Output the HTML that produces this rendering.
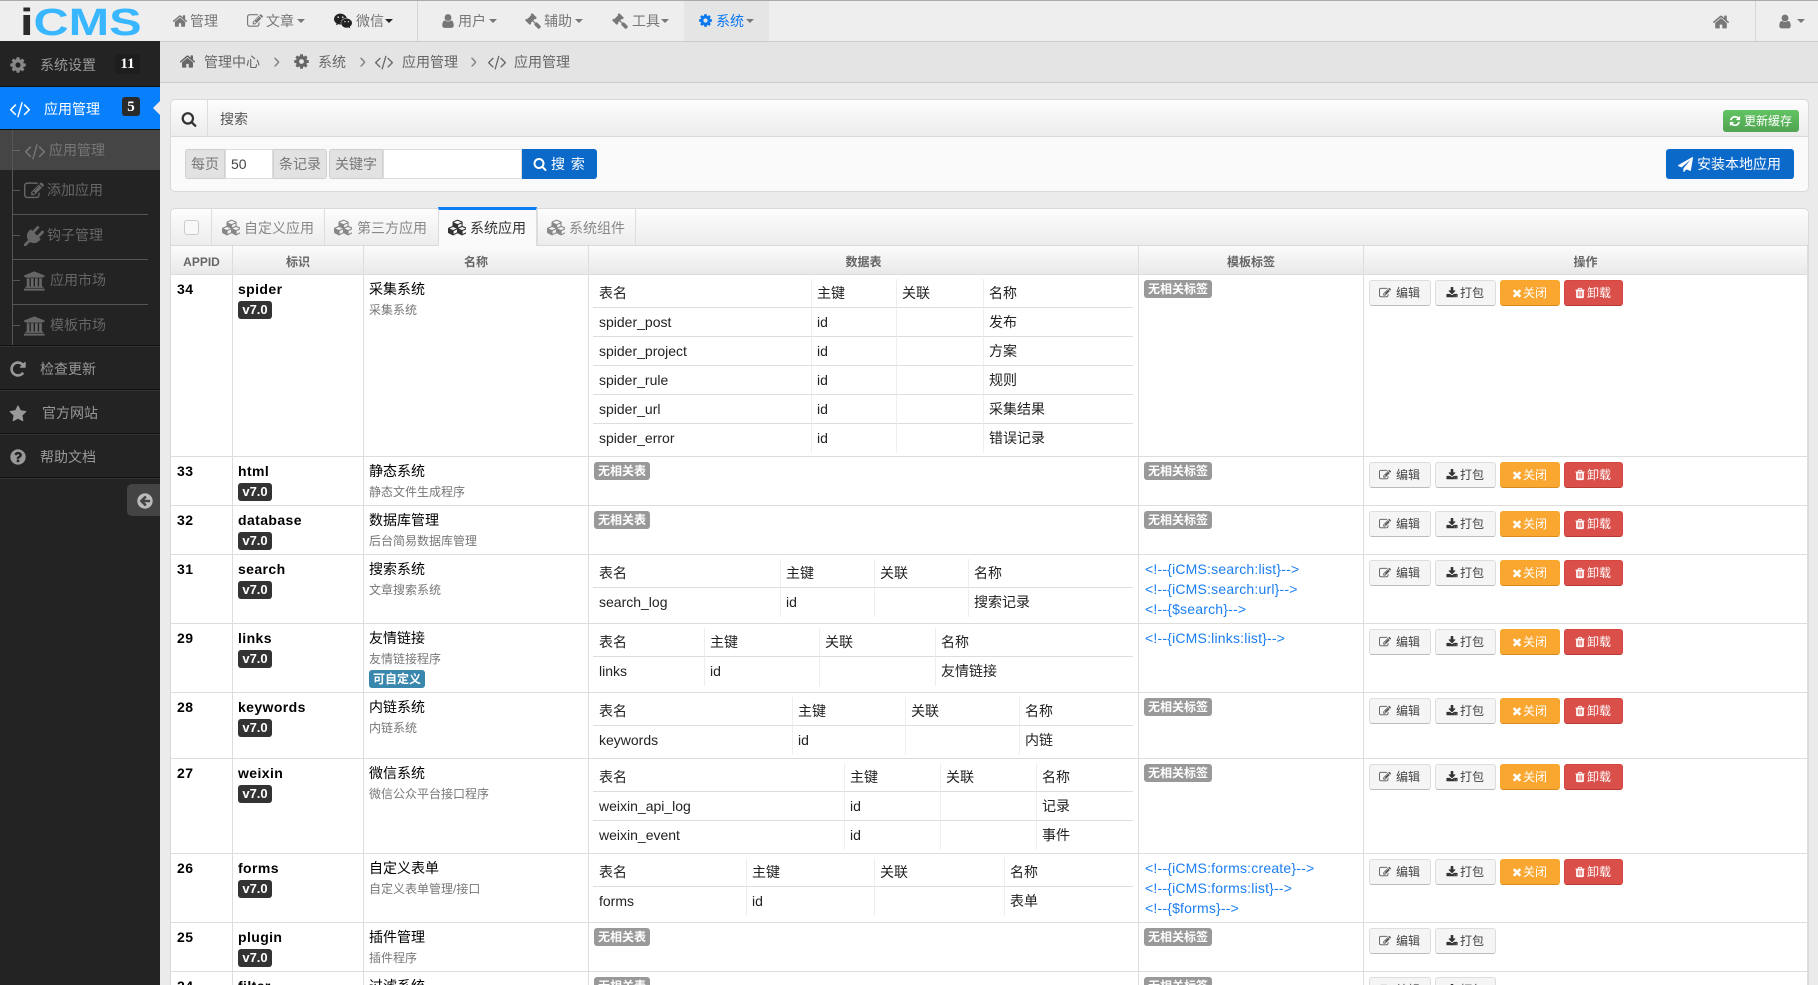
<!DOCTYPE html>
<html lang="zh"><head><meta charset="utf-8"><title>应用管理</title>
<style>
*{box-sizing:border-box}
html,body{margin:0;padding:0;width:1818px;height:985px;overflow:hidden;background:#ebebeb}
body{position:relative;font:14px/20px "Liberation Sans","Noto Sans CJK SC",sans-serif;color:#000}
.a{position:absolute;white-space:nowrap}
svg.i{position:absolute;display:block}
.t{position:absolute;white-space:nowrap;line-height:20px}
.c{position:absolute;width:0;height:0;border-left:4px solid transparent;border-right:4px solid transparent;border-top:4px solid #777}
#nav{position:absolute;left:0;top:0;width:1818px;height:42px;background:#eee;border-top:1px solid #aaa;border-bottom:1px solid #ccc}
#nav .t{color:#777;top:10px}
#side{position:absolute;left:0;top:41px;width:160px;height:944px;background:#232323}
#side .t{color:#999}
#side .s{color:#666}
.sep{position:absolute;left:0;width:160px;height:1px;background:#111}
#bc{position:absolute;left:160px;top:42px;width:1658px;height:41px;background:#e4e4e4;border-bottom:1px solid #ccc}
#bc .t{color:#666;top:10px}
#bc .ch{font-size:22px;color:#888;font-family:"Liberation Sans",sans-serif;top:9px}
.box{position:absolute;left:170px;width:1639px;background:#fafafa;border:1px solid #d9d9d9;border-radius:5px}
.grad{background:linear-gradient(#fdfdfd,#ececec)}
.addon{position:absolute;top:149px;height:30px;background:#e2e2e2;border:1px solid #d0d0d0;color:#777;text-align:center;line-height:28px;font-size:14px}
.inp{position:absolute;top:149px;height:30px;background:#fff;border:1px solid #ddd;line-height:28px;color:#444;padding-left:5px}
#tb{position:absolute;left:171px;top:246px;border-collapse:separate;border-spacing:0;table-layout:fixed;width:1637px;background:#fff}
#tb>thead th{height:29px;padding:4px 0 0;font-size:12px;line-height:24px;color:#666;font-weight:bold;background:linear-gradient(#fbfbfb,#e9e9e9);border-right:1px solid #ddd;border-bottom:1px solid #ddd}
#tb>tbody>tr>td{padding:0;vertical-align:top;border-right:1px solid #ddd;border-bottom:1px solid #ddd}
.id{padding:4px 0 0 6px!important;font-weight:bold;letter-spacing:.5px}
.nm{padding:4px 0 0 5px!important}
.nm b{display:block;letter-spacing:.4px}
.v{display:block;width:34px;height:18px;margin-top:2px;background:#333;color:#fff;border-radius:3px;font:bold 13px/18px "Liberation Sans",sans-serif;text-align:center}
.ti{padding:4px 0 0 5px!important}
.ti small{display:block;font-size:12px;color:#777;line-height:21px;margin-top:1px}
.cu{display:block;width:56px;height:18px;margin-top:0;background:#3a87ad;color:#fff;border-radius:3px;font-size:12px;line-height:18px;font-weight:bold;text-align:center}
.dt{padding:4px 0 0 4px!important}
.dt table{border-collapse:separate;border-spacing:0;table-layout:fixed;width:540px}
.dt td{height:29px;padding:0 0 0 5px;border-right:1px solid #eee;border-bottom:1px solid #ddd;line-height:28px;white-space:nowrap;color:#222;vertical-align:top}
.dt td:first-child{padding-left:6px}
.dt td:last-child{border-right:0}
.dt tr:last-child td{border-bottom:0}
.no{display:inline-block;height:18px;margin:5px 0 0 5px;background:#999;color:#fff;border-radius:3px;font-size:12px;font-weight:bold;line-height:18px;padding:0 4px;vertical-align:top}
.dt .no{margin-left:1px}
.lk{padding:4px 0 0 6px!important;color:#1a7df0;line-height:20px;letter-spacing:.2px}
.op{padding:4px 0 0 0!important;position:relative}
.op .b{position:absolute;top:5px;height:26px;border-radius:3px;font-size:12px;line-height:25px;white-space:nowrap}
.b1{left:5px;width:62px}.b2{left:71px;width:61px}.b3{left:136px;width:60px}.b4{left:200px;width:59px}
.bd{background:#f5f5f5;border:1px solid #ddd;border-bottom:1px solid #bbb;color:#444}
.b3{background:#faa732;border:1px solid #f8a52c;border-bottom:1px solid #d98c1e;color:#fff}
.b4{background:#da4f49;border:1px solid #d6453f;border-bottom:1px solid #b93a35;color:#fff}
.b svg{position:absolute;top:6px;width:12px;height:12px}
.b span{position:absolute;top:0}
.b1 svg{left:9px;fill:#555}.b1 span{left:26px}
.b2 svg{left:10px;fill:#333}.b2 span{left:24px}
.b3 svg{left:10px;fill:#fff}.b3 span{left:22px}
.b4 svg{left:9px;fill:#fff}.b4 span{left:22px}
</style></head><body>
<svg width="0" height="0" style="position:absolute"><defs>
<symbol id="home" viewBox="0 0 1792 1792"><path d="M1472 992v480q0 26-19 45t-45 19h-384v-384h-256v384h-384q-26 0-45-19t-19-45v-480q0-1 .5-3t.5-3l575-474 575 474q1 2 1 6zm223-69l-62 74q-8 9-21 11h-3q-13 0-21-7l-692-577-692 577q-12 8-24 7-13-2-21-11l-62-74q-8-10-7-23.5t11-21.5l719-599q32-26 76-26t76 26l244 204v-195q0-14 9-23t23-9h192q14 0 23 9t9 23v408l219 182q10 8 11 21.5t-7 23.5z"/></symbol>
<symbol id="user" viewBox="0 0 1792 1792"><path d="M1536 1399q0 109-62.5 187t-150.5 78h-854q-88 0-150.5-78t-62.5-187q0-85 8.5-160.5t31.5-152 58.5-131 94-89 134.5-34.5q131 128 313 128t313-128q76 0 134.5 34.5t94 89 58.5 131 31.5 152 8.5 160.5zm-256-887q0 159-112.5 271.5t-271.5 112.5-271.5-112.5-112.5-271.5 112.5-271.5 271.5-112.5 271.5 112.5 112.5 271.5z"/></symbol>
<symbol id="cog" viewBox="0 0 1792 1792"><path d="M1152 896q0-106-75-181t-181-75-181 75-75 181 75 181 181 75 181-75 75-181zm512-109v222q0 12-8 23t-20 13l-185 28q-19 54-39 91 35 50 107 138 10 12 10 25t-9 23q-27 37-99 108t-94 71q-12 0-26-9l-138-108q-44 23-91 38-16 136-29 186-7 28-36 28h-222q-14 0-24.5-8.5t-11.5-21.5l-28-184q-49-16-90-37l-141 107q-10 9-25 9-14 0-25-11-126-114-165-168-7-10-7-23 0-12 8-23 15-21 51-66.5t54-70.5q-27-50-41-99l-183-27q-13-2-21-12.5t-8-23.5v-222q0-12 8-23t19-13l186-28q14-46 39-92-40-57-107-138-10-12-10-24 0-10 9-23 26-36 98.5-107.5t94.5-71.5q13 0 26 10l138 107q44-23 91-38 16-136 29-186 7-28 36-28h222q14 0 24.5 8.5t11.5 21.5l28 184q49 16 90 37l142-107q9-9 24-9 13 0 25 10 129 119 165 170 7 8 7 22 0 12-8 23-15 21-51 66.5t-54 70.5q26 50 41 98l183 28q13 2 21 12.5t8 23.5z"/></symbol>
<symbol id="code" viewBox="0 0 1792 1792"><path d="M553 1399l-50 50q-10 10-23 10t-23-10l-466-466q-10-10-10-23t10-23l466-466q10-10 23-10t23 10l50 50q10 10 10 23t-10 23l-393 393 393 393q10 10 10 23t-10 23zm591-1067l-373 1291q-4 13-15.5 19.5t-23.5 2.5l-62-17q-13-4-19.5-15.5t-2.5-24.5l373-1291q4-13 15.5-19.5t23.5-2.5l62 17q13 4 19.5 15.5t2.5 24.5zm657 651l-466 466q-10 10-23 10t-23-10l-50-50q-10-10-10-23t10-23l393-393-393-393q-10-10-10-23t10-23l50-50q10-10 23-10t23 10l466 466q10 10 10 23t-10 23z"/></symbol>
<symbol id="star" viewBox="0 0 1792 1792"><path d="M1728 647q0 22-26 48l-363 354 86 500q1 7 1 20 0 21-10.5 35.5t-30.5 14.5q-19 0-40-12l-449-236-449 236q-22 12-40 12-21 0-31.5-14.5t-10.5-35.5q0-6 2-20l86-500-364-354q-25-27-25-48 0-37 56-46l502-73 225-455q19-41 49-41t49 41l225 455 502 73q56 9 56 46z"/></symbol>
<symbol id="help" viewBox="0 0 1792 1792"><path d="M1024 1376v-192q0-14-9-23t-23-9h-192q-14 0-23 9t-9 23v192q0 14 9 23t23 9h192q14 0 23-9t9-23zm256-672q0-88-55.5-163t-138.5-116-170-41q-243 0-371 213-15 24 8 42l132 100q7 6 19 6 16 0 25-12 53-68 86-92 34-24 86-24 48 0 85.5 26t37.5 59q0 38-20 61t-68 45q-63 28-115.5 86.5t-52.5 125.5v36q0 14 9 23t23 9h192q14 0 23-9t9-23q0-19 21.5-49.5t54.5-49.5q32-18 49-28.5t46-35 44.5-48 28-60.5 12.5-81zm384 192q0 209-103 385.5t-279.5 279.5-385.5 103-385.5-103-279.5-279.5-103-385.5 103-385.5 279.5-279.5 385.5-103 385.5 103 279.5 279.5 103 385.5z"/></symbol>
<symbol id="left" viewBox="0 0 1792 1792"><path d="M1408 960v-128q0-26-19-45t-45-19h-502l189-189q19-19 19-45t-19-45l-91-91q-18-18-45-18t-45 18l-362 362-91 91q-18 18-18 45t18 45l91 91 362 362q18 18 45 18t45-18l91-91q18-18 18-45t-18-45l-189-189h502q26 0 45-19t19-45zm256-64q0 209-103 385.5t-279.5 279.5-385.5 103-385.5-103-279.5-279.5-103-385.5 103-385.5 279.5-279.5 385.5-103 385.5 103 279.5 279.5 103 385.5z"/></symbol>
<symbol id="refresh" viewBox="0 0 1792 1792"><path d="M1639 1056q0 5-1 7-64 268-268 434.5t-478 166.5q-146 0-282.5-55t-243.5-157l-129 129q-19 19-45 19t-45-19-19-45v-448q0-26 19-45t45-19h448q26 0 45 19t19 45-19 45l-137 137q71 66 161 102t187 36q134 0 250-65t186-179q11-17 53-117 8-23 30-23h192q13 0 22.5 9.5t9.5 22.5zm25-800v448q0 26-19 45t-45 19h-448q-26 0-45-19t-19-45 19-45l138-138q-148-137-349-137-134 0-250 65t-186 179q-11 17-53 117-8 23-30 23h-199q-13 0-22.5-9.5t-9.5-22.5v-7q65-268 270-434.5t480-166.5q146 0 284 55.5t245 156.5l130-129q19-19 45-19t45 19 19 45z"/></symbol>
<symbol id="repeat" viewBox="0 0 1792 1792"><path d="M1664 256v448q0 26-19 45t-45 19h-448q-42 0-59-40-17-39 14-69l138-138q-148-137-349-137-104 0-198.5 40.5t-163.5 109.5-109.5 163.5-40.5 198.5 40.5 198.5 109.5 163.5 163.5 109.5 198.5 40.5q119 0 225-52t179-147q7-10 23-12 14 0 25 9l137 138q9 8 9.5 20.5t-7.5 22.5q-109 132-264 204.5t-327 72.5q-156 0-298-61t-245-164-164-245-61-298 61-298 164-245 245-164 298-61q147 0 284.5 55.5t244.5 156.5l130-129q29-31 70-14 39 17 39 59z"/></symbol>
<symbol id="edit" viewBox="0 0 1792 1792"><path d="M888 1184l116-116-152-152-116 116v56h96v96h56zm440-720q-16-16-33 1l-350 350q-17 17-1 33t33-1l350-350q17-17 1-33zm80 594v190q0 119-84.5 203.5t-203.5 84.5h-832q-119 0-203.5-84.5t-84.5-203.5v-832q0-119 84.5-203.5t203.5-84.5h832q63 0 117 25 15 7 18 23 3 17-9 29l-49 49q-14 14-32 8-23-6-45-6h-832q-66 0-113 47t-47 113v832q0 66 47 113t113 47h832q66 0 113-47t47-113v-126q0-13 9-22l64-64q15-15 35-7t20 29zm-96-738l288 288-672 672h-288v-288zm444 132l-92 92-288-288 92-92q28-28 68-28t68 28l152 152q28 28 28 68t-28 68z"/></symbol>
<symbol id="dl" viewBox="0 0 1792 1792"><path d="M1344 1344q0-26-19-45t-45-19-45 19-19 45 19 45 45 19 45-19 19-45zm256 0q0-26-19-45t-45-19-45 19-19 45 19 45 45 19 45-19 19-45zm128-224v320q0 40-28 68t-68 28h-1472q-40 0-68-28t-28-68v-320q0-40 28-68t68-28h465l135 136q58 56 136 56t136-56l136-136h464q40 0 68 28t28 68zm-325-569q17 41-14 70l-448 448q-18 19-45 19t-45-19l-448-448q-31-29-14-70 17-39 59-39h256v-448q0-26 19-45t45-19h256q26 0 45 19t19 45v448h256q42 0 59 39z"/></symbol>
<symbol id="x" viewBox="0 0 1792 1792"><path d="M1490 1322q0 40-28 68l-136 136q-28 28-68 28t-68-28l-294-294-294 294q-28 28-68 28t-68-28l-136-136q-28-28-28-68t28-68l294-294-294-294q-28-28-28-68t28-68l136-136q28-28 68-28t68 28l294 294 294-294q28-28 68-28t68 28l136 136q28 28 28 68t-28 68l-294 294 294 294q28 28 28 68z"/></symbol>
<symbol id="trash" viewBox="0 0 1792 1792"><path d="M704 1376v-704q0-14-9-23t-23-9h-64q-14 0-23 9t-9 23v704q0 14 9 23t23 9h64q14 0 23-9t9-23zm256 0v-704q0-14-9-23t-23-9h-64q-14 0-23 9t-9 23v704q0 14 9 23t23 9h64q14 0 23-9t9-23zm256 0v-704q0-14-9-23t-23-9h-64q-14 0-23 9t-9 23v704q0 14 9 23t23 9h64q14 0 23-9t9-23zm-544-992h448l-48-117q-7-9-17-11h-317q-10 2-17 11zm928 32v64q0 14-9 23t-23 9h-96v948q0 83-47 143.5t-113 60.5h-832q-66 0-113-58.5t-47-141.5v-952h-96q-14 0-23-9t-9-23v-64q0-14 9-23t23-9h309l70-167q15-37 54-63t79-26h320q40 0 79 26t54 63l70 167h309q14 0 23 9t9 23z"/></symbol>
<symbol id="plane" viewBox="0 0 1792 1792"><path d="M1764 11q33 24 27 64l-256 1536q-5 29-32 45-14 8-31 8-11 0-24-5l-453-185-242 295q-18 23-49 23-13 0-22-4-19-7-30.5-23.5t-11.5-36.5v-349l864-1059-1069 925-395-162q-37-14-40-55-2-40 32-59l1664-960q15-9 32-9 20 0 36 11z"/></symbol>
<symbol id="bank" viewBox="0 0 2048 1792"><path d="M960 0l960 384v128h-128q0 26-20.5 45t-48.5 19h-1526q-28 0-48.5-19t-20.5-45h-128v-128zm-704 640h256v768h128v-768h256v768h128v-768h256v768h128v-768h256v768h59q28 0 48.5 19t20.5 45v64h-1664v-64q0-26 20.5-45t48.5-19h59v-768zm1595 960q28 0 48.5 19t20.5 45v128h-1920v-128q0-26 20.5-45t48.5-19h1782z"/></symbol>
<symbol id="gavel" viewBox="0 0 1792 1792"><path d="M1771 1536q0 53-37 90l-107 108q-39 37-91 37-53 0-90-37l-363-364q-38-36-38-90 0-53 43-96l-256-256-126 126q-14 14-34 14t-34-14q2 2 12.5 12t12.5 13 10 11.5 10 13.5 6 13.5 5.5 16.5 1.5 18q0 38-28 68-3 3-16.5 18t-19 20.5-18.5 16.5-22 15.5-22 9-26 4.5q-40 0-68-28l-408-408q-28-28-28-68 0-13 4.5-26t9-22 15.5-22 16.5-18.5 20.5-19 18-16.5q30-28 68-28 10 0 18 1.5t16.5 5.5 13.5 6 13.5 10 11.5 10 13 12.5 12 12.5q-14-14-14-34t14-34l348-348q14-14 34-14t34 14q-2-2-12.5-12t-12.5-13-10-11.5-10-13.5-6-13.5-5.5-16.5-1.5-18q0-38 28-68 3-3 16.5-18t19-20.5 18.5-16.5 22-15.5 22-9 26-4.5q40 0 68 28l408 408q28 28 28 68 0 13-4.5 26t-9 22-15.5 22-16.5 18.5-20.5 19-18 16.5q-30 28-68 28-10 0-18-1.5t-16.5-5.5-13.5-6-13.5-10-11.5-10-13-12.5-12-12.5q14 14 14 34t-14 34l-126 126 256 256q43-43 96-43 52 0 91 37l363 363q37 39 37 91z"/></symbol>
<symbol id="wechat" viewBox="0 0 2048 1792"><path d="M580 461q0-41-25-66t-66-25q-43 0-76 25.5t-33 65.5q0 39 33 64.5t76 25.5q41 0 66-24.5t25-65.5zm743 507q0-28-25.5-50t-65.5-22q-27 0-49.5 22.5t-22.5 49.5q0 28 22.5 50.5t49.5 22.5q40 0 65.5-22t25.5-51zm-236-507q0-41-24.5-66t-65.5-25q-43 0-76 25.5t-33 65.5q0 39 33 64.5t76 25.5q41 0 65.5-24.5t24.5-65.5zm635 507q0-28-26-50t-65-22q-27 0-49.5 22.5t-22.5 49.5q0 28 22.5 50.5t49.5 22.5q39 0 65-22t26-51zm-266-397q-31-4-70-4-169 0-311 77t-223.5 208.5-81.5 287.5q0 78 23 152-35 3-68 3-26 0-50-1.5t-55-6.5-44.5-7-54.5-10.5-50-10.5l-253 127 72-218q-290-203-290-490 0-169 97.5-311t264-223.5 363.5-81.5q176 0 332.5 66t262 182.5 136.5 260.5zm592 561q0 117-68.5 223.5t-185.5 193.5l55 181-199-109q-150 37-218 37-169 0-311-70.5t-223.5-191.5-81.5-264 81.5-264 223.5-191.5 311-70.5q161 0 303 70.5t227.5 192 85.5 263.5z"/></symbol>
<symbol id="plug" viewBox="0 0 1792 1792"><path d="M1755 453q37 38 37 90.5t-37 90.5l-401 400 150 150-160 160q-163 163-389.5 186.5t-411.5-100.5l-362 362h-181v-181l362-362q-124-185-100.5-411.5t186.5-389.5l160-160 150 150 400-401q38-37 91-37t90 37 37 90.5-37 90.5l-400 401 234 234 401-400q38-37 91-37t90 37z"/></symbol>
<symbol id="cubes" viewBox="0 0 2048 1792"><path d="M640 1632l384-192v-314l-384 164v342zm-64-454l404-173-404-173-404 173zm1088 454l384-192v-314l-384 164v342zm-64-454l404-173-404-173-404 173zm-448-293l384-165v-266l-384 164v267zm-64-379l441-189-441-189-441 189zm1088 518v416q0 36-19 67t-52 47l-448 224q-25 14-57 14t-57-14l-448-224q-4-2-7-4-2 2-7 4l-448 224q-25 14-57 14t-57-14l-448-224q-33-16-52-47t-19-67v-416q0-38 21.5-70t56.5-48l434-186v-400q0-38 21.5-70t56.5-48l448-192q23-10 50-10t50 10l448 192q35 16 56.5 48t21.5 70v400l434 186q36 16 57 48t21 70z"/></symbol>
<symbol id="search" viewBox="0 0 1792 1792"><path d="M1216 832q0-185-131.5-316.5t-316.5-131.5-316.5 131.5-131.5 316.5 131.5 316.5 316.5 131.5 316.5-131.5 131.5-316.5zm512 832q0 52-38 90t-90 38q-54 0-90-38l-343-342q-179 124-399 124-143 0-273.5-55.5t-225-150-150-225-55.5-273.5 55.5-273.5 150-225 225-150 273.5-55.5 273.5 55.5 225 150 150 225 55.5 273.5q0 220-124 399l343 343q37 37 37 90z"/></symbol>
</defs></svg>

<!-- top navbar -->
<div id="nav">
 <div class="a" style="left:20px;top:0;font:bold 38px/44px 'Liberation Sans',sans-serif;transform:scaleX(1.28);transform-origin:0 0"><span style="color:#2a2a2a">i</span><span style="color:#38b6ff">CMS</span></div>
 <svg class="i" style="left:172px;top:12px;width:16px;height:16px;fill:#777"><use href="#home"/></svg><span class="t" style="left:190px">管理</span>
 <svg class="i" style="left:247px;top:12px;width:16px;height:16px;fill:#777"><use href="#edit"/></svg><span class="t" style="left:266px">文章</span><i class="c" style="left:297px;top:18px"></i>
 <svg class="i" style="left:334px;top:12px;width:18px;height:16px;fill:#222"><use href="#wechat"/></svg><span class="t" style="left:356px">微信</span><i class="c" style="left:385px;top:18px;border-top-color:#222"></i>
 <div class="a" style="left:417px;top:0;width:1px;height:40px;background:#d5d5d5"></div>
 <svg class="i" style="left:440px;top:12px;width:16px;height:16px;fill:#777"><use href="#user"/></svg><span class="t" style="left:458px">用户</span><i class="c" style="left:489px;top:18px"></i>
 <svg class="i" style="left:525px;top:12px;width:16px;height:16px;fill:#777"><use href="#gavel"/></svg><span class="t" style="left:544px">辅助</span><i class="c" style="left:575px;top:18px"></i>
 <svg class="i" style="left:612px;top:12px;width:16px;height:16px;fill:#777"><use href="#gavel"/></svg><span class="t" style="left:632px">工具</span><i class="c" style="left:661px;top:18px"></i>
 <div class="a" style="left:684px;top:0;width:85px;height:40px;background:#e5e5e5"></div>
 <svg class="i" style="left:698px;top:12px;width:15px;height:15px;fill:#0a78f0"><use href="#cog"/></svg><span class="t" style="left:716px;color:#0a78f0">系统</span><i class="c" style="left:746px;top:18px"></i>
 <div class="a" style="left:1755px;top:0;width:1px;height:40px;background:#d5d5d5"></div>
 <svg class="i" style="left:1712px;top:12px;width:18px;height:18px;fill:#777"><use href="#home"/></svg>
 <svg class="i" style="left:1777px;top:12px;width:16px;height:17px;fill:#777"><use href="#user"/></svg><i class="c" style="left:1797px;top:18px"></i>
</div>

<!-- sidebar -->
<div id="side">
 <svg class="i" style="left:9px;top:15px;width:18px;height:18px;fill:#888"><use href="#cog"/></svg><span class="t" style="left:40px;top:14px">系统设置</span>
 <div class="a" style="left:115px;top:13px;width:25px;height:20px;background:#1d1d1d;border-radius:3px;color:#fff;font:bold 15px/20px 'Liberation Serif',serif;text-align:center">11</div>
 <div class="sep" style="top:45px"></div>
 <div class="a" style="left:0;top:46px;width:160px;height:43px;background:#087ffb;border-bottom:1px solid #111"></div>
 <svg class="i" style="left:10px;top:58px;width:20px;height:20px;fill:#fff"><use href="#code"/></svg><span class="t" style="left:44px;top:58px;color:#fff">应用管理</span>
 <div class="a" style="left:122px;top:56px;width:18px;height:19px;background:#2a2a2a;border-radius:3px;color:#fff;font:bold 15px/20px 'Liberation Serif',serif;text-align:center">5</div>
 <div class="a" style="left:153px;top:60px;width:0;height:0;border-top:7px solid transparent;border-bottom:7px solid transparent;border-right:7px solid #ebebeb"></div>
 <div class="a" style="left:0;top:89px;width:160px;height:40px;background:#454545"></div>
 <div class="a" style="left:12px;top:89px;width:1px;height:215px;background:#555"></div>
 <div class="a" style="left:12px;top:109px;width:8px;height:1px;background:#666"></div>
 <div class="a" style="left:12px;top:149px;width:8px;height:1px;background:#555"></div>
 <div class="a" style="left:12px;top:194px;width:8px;height:1px;background:#555"></div>
 <div class="a" style="left:12px;top:239px;width:8px;height:1px;background:#555"></div>
 <div class="a" style="left:12px;top:284px;width:8px;height:1px;background:#555"></div>
 <div class="a" style="left:12px;top:173px;width:136px;height:1px;background:#555"></div>
 <div class="a" style="left:12px;top:218px;width:136px;height:1px;background:#555"></div>
 <div class="a" style="left:12px;top:263px;width:136px;height:1px;background:#555"></div>
 <svg class="i" style="left:25px;top:100px;width:20px;height:20px;fill:#777"><use href="#code"/></svg><span class="t s" style="left:49px;top:99px;color:#777">应用管理</span>
 <svg class="i" style="left:24px;top:140px;width:20px;height:20px;fill:#666"><use href="#edit"/></svg><span class="t s" style="left:47px;top:139px">添加应用</span>
 <svg class="i" style="left:24px;top:185px;width:20px;height:20px;fill:#666"><use href="#plug"/></svg><span class="t s" style="left:47px;top:184px">钩子管理</span>
 <svg class="i" style="left:24px;top:230px;width:22px;height:20px;fill:#666"><use href="#bank"/></svg><span class="t s" style="left:50px;top:229px">应用市场</span>
 <svg class="i" style="left:24px;top:275px;width:22px;height:20px;fill:#666"><use href="#bank"/></svg><span class="t s" style="left:50px;top:274px">模板市场</span>
 <div class="sep" style="top:304px"></div><div class="a" style="left:0;top:305px;width:160px;height:1px;background:#333"></div>
 <svg class="i" style="left:9px;top:319px;width:18px;height:18px;fill:#999"><use href="#repeat"/></svg><span class="t" style="left:40px;top:318px">检查更新</span>
 <div class="sep" style="top:348px"></div><div class="a" style="left:0;top:349px;width:160px;height:1px;background:#333"></div>
 <svg class="i" style="left:9px;top:364px;width:18px;height:18px;fill:#999"><use href="#star"/></svg><span class="t" style="left:42px;top:362px">官方网站</span>
 <div class="sep" style="top:392px"></div><div class="a" style="left:0;top:393px;width:160px;height:1px;background:#333"></div>
 <svg class="i" style="left:9px;top:407px;width:18px;height:18px;fill:#999"><use href="#help"/></svg><span class="t" style="left:40px;top:406px">帮助文档</span>
 <div class="sep" style="top:436px"></div><div class="a" style="left:0;top:437px;width:160px;height:1px;background:#333"></div>
 <div class="a" style="left:127px;top:443px;width:33px;height:32px;background:#444;border-radius:5px 0 0 5px"></div>
 <svg class="i" style="left:136px;top:451px;width:18px;height:18px;fill:#bbb"><use href="#left"/></svg>
</div>

<!-- breadcrumb -->
<div id="bc">
 <svg class="i" style="left:19px;top:11px;width:17px;height:17px;fill:#666"><use href="#home"/></svg><span class="t" style="left:44px">管理中心</span><span class="t ch" style="left:113px">&#8250;</span>
 <svg class="i" style="left:133px;top:11px;width:17px;height:17px;fill:#666"><use href="#cog"/></svg><span class="t" style="left:158px">系统</span><span class="t ch" style="left:199px">&#8250;</span>
 <svg class="i" style="left:215px;top:11px;width:18px;height:18px;fill:#666"><use href="#code"/></svg><span class="t" style="left:242px">应用管理</span><span class="t ch" style="left:310px">&#8250;</span>
 <svg class="i" style="left:328px;top:11px;width:18px;height:18px;fill:#666"><use href="#code"/></svg><span class="t" style="left:354px">应用管理</span>
</div>

<!-- search widget -->
<div class="box" style="top:99px;height:93px"></div>
<div class="a grad" style="left:171px;top:100px;width:1637px;height:37px;border-bottom:1px solid #d9d9d9;border-radius:5px 5px 0 0"></div>
<div class="a" style="left:207px;top:100px;width:1px;height:36px;background:#ddd"></div>
<svg class="i" style="left:181px;top:111px;width:16px;height:16px;fill:#333"><use href="#search"/></svg>
<span class="t" style="left:220px;top:109px;color:#555">搜索</span>
<div class="a" style="left:1723px;top:110px;width:76px;height:22px;background:linear-gradient(#62c462,#51a351);border-radius:3px;color:#fff;font-size:12px;line-height:22px;padding-left:21px">更新缓存</div>
<svg class="i" style="left:1729px;top:115px;width:12px;height:12px;fill:#fff"><use href="#refresh"/></svg>
<div class="addon" style="left:185px;width:40px;border-radius:3px 0 0 3px">每页</div>
<div class="inp" style="left:225px;width:48px">50</div>
<div class="addon" style="left:273px;width:54px;border-radius:0 3px 3px 0">条记录</div>
<div class="addon" style="left:329px;width:54px;border-radius:3px 0 0 3px">关键字</div>
<div class="inp" style="left:383px;width:139px"></div>
<div class="a" style="left:522px;top:149px;width:75px;height:30px;background:#0b69c9;border-radius:0 3px 3px 0;color:#fff;line-height:30px;padding-left:29px;letter-spacing:1px">搜 索</div>
<svg class="i" style="left:533px;top:157px;width:14px;height:14px;fill:#fff"><use href="#search"/></svg>
<div class="a" style="left:1666px;top:149px;width:128px;height:30px;background:#0b69c9;border-radius:3px;color:#fff;line-height:30px;padding-left:31px">安装本地应用</div>
<svg class="i" style="left:1678px;top:157px;width:15px;height:15px;fill:#fff"><use href="#plane"/></svg>

<!-- app widget -->
<div class="a" style="left:170px;top:208px;width:1639px;height:790px;background:#fff;border:1px solid #d9d9d9;border-radius:5px 5px 0 0"></div>
<div class="a grad" style="left:171px;top:209px;width:1637px;height:37px;border-bottom:1px solid #d9d9d9;border-radius:5px 5px 0 0"></div>
<div class="a" style="left:211px;top:209px;width:1px;height:36px;background:#ddd"></div>
<div class="a" style="left:184px;top:220px;width:15px;height:15px;background:#f8f8f8;border:1px solid #ccc;border-radius:3px"></div>
<div class="a" style="left:324px;top:209px;width:1px;height:36px;background:#ddd"></div>
<div class="a" style="left:537px;top:209px;width:1px;height:36px;background:#ddd"></div>
<div class="a" style="left:635px;top:209px;width:1px;height:36px;background:#ddd"></div>
<div class="a" style="left:438px;top:207px;width:99px;height:40px;background:#fafafa;border-top:3px solid #0a7df5;border-left:1px solid #ddd;border-right:1px solid #ddd"></div>
<svg class="i" style="left:222px;top:219px;width:18px;height:17px;fill:#888"><use href="#cubes"/></svg><span class="t" style="left:244px;top:218px;color:#888">自定义应用</span>
<svg class="i" style="left:334px;top:219px;width:18px;height:17px;fill:#888"><use href="#cubes"/></svg><span class="t" style="left:357px;top:218px;color:#888">第三方应用</span>
<svg class="i" style="left:448px;top:219px;width:18px;height:17px;fill:#333"><use href="#cubes"/></svg><span class="t" style="left:470px;top:218px;color:#333">系统应用</span>
<svg class="i" style="left:547px;top:219px;width:18px;height:17px;fill:#888"><use href="#cubes"/></svg><span class="t" style="left:569px;top:218px;color:#888">系统组件</span>

<table id="tb">
<colgroup><col style="width:62px"><col style="width:131px"><col style="width:225px"><col style="width:550px"><col style="width:225px"><col style="width:444px"></colgroup>
<thead><tr><th>APPID</th><th>标识</th><th>名称</th><th>数据表</th><th>模板标签</th><th>操作</th></tr></thead>
<tbody>
<tr style="height:182px"><td class="id">34</td><td class="nm"><b>spider</b><span class="v">v7.0</span></td><td class="ti">采集系统<small>采集系统</small></td>
<td class="dt"><table><colgroup><col style="width:219px"><col style="width:85px"><col style="width:87px"><col style="width:149px"></colgroup>
<tr><td>表名</td><td>主键</td><td>关联</td><td>名称</td></tr><tr><td>spider_post</td><td>id</td><td></td><td>发布</td></tr><tr><td>spider_project</td><td>id</td><td></td><td>方案</td></tr><tr><td>spider_rule</td><td>id</td><td></td><td>规则</td></tr><tr><td>spider_url</td><td>id</td><td></td><td>采集结果</td></tr><tr><td>spider_error</td><td>id</td><td></td><td>错误记录</td></tr></table></td>
<td><span class="no">无相关标签</span></td>
<td class="op"><div class="b bd b1"><svg><use href="#edit"/></svg><span>编辑</span></div><div class="b bd b2"><svg><use href="#dl"/></svg><span>打包</span></div><div class="b b3"><svg><use href="#x"/></svg><span>关闭</span></div><div class="b b4"><svg><use href="#trash"/></svg><span>卸载</span></div></td></tr>

<tr style="height:49px"><td class="id">33</td><td class="nm"><b>html</b><span class="v">v7.0</span></td><td class="ti">静态系统<small>静态文件生成程序</small></td>
<td class="dt" style="padding-top:0!important"><span class="no">无相关表</span></td><td><span class="no">无相关标签</span></td>
<td class="op"><div class="b bd b1"><svg><use href="#edit"/></svg><span>编辑</span></div><div class="b bd b2"><svg><use href="#dl"/></svg><span>打包</span></div><div class="b b3"><svg><use href="#x"/></svg><span>关闭</span></div><div class="b b4"><svg><use href="#trash"/></svg><span>卸载</span></div></td></tr>

<tr style="height:49px"><td class="id">32</td><td class="nm"><b>database</b><span class="v">v7.0</span></td><td class="ti">数据库管理<small>后台简易数据库管理</small></td>
<td class="dt" style="padding-top:0!important"><span class="no">无相关表</span></td><td><span class="no">无相关标签</span></td>
<td class="op"><div class="b bd b1"><svg><use href="#edit"/></svg><span>编辑</span></div><div class="b bd b2"><svg><use href="#dl"/></svg><span>打包</span></div><div class="b b3"><svg><use href="#x"/></svg><span>关闭</span></div><div class="b b4"><svg><use href="#trash"/></svg><span>卸载</span></div></td></tr>

<tr style="height:69px"><td class="id">31</td><td class="nm"><b>search</b><span class="v">v7.0</span></td><td class="ti">搜索系统<small>文章搜索系统</small></td>
<td class="dt"><table><colgroup><col style="width:188px"><col style="width:94px"><col style="width:94px"><col style="width:164px"></colgroup><tr><td>表名</td><td>主键</td><td>关联</td><td>名称</td></tr><tr><td>search_log</td><td>id</td><td></td><td>搜索记录</td></tr></table></td>
<td class="lk">&lt;!--{iCMS:search:list}--&gt;<br>&lt;!--{iCMS:search:url}--&gt;<br>&lt;!--{$search}--&gt;</td>
<td class="op"><div class="b bd b1"><svg><use href="#edit"/></svg><span>编辑</span></div><div class="b bd b2"><svg><use href="#dl"/></svg><span>打包</span></div><div class="b b3"><svg><use href="#x"/></svg><span>关闭</span></div><div class="b b4"><svg><use href="#trash"/></svg><span>卸载</span></div></td></tr>

<tr style="height:69px"><td class="id">29</td><td class="nm"><b>links</b><span class="v">v7.0</span></td><td class="ti">友情链接<small>友情链接程序</small><span class="cu">可自定义</span></td>
<td class="dt"><table><colgroup><col style="width:112px"><col style="width:115px"><col style="width:116px"><col style="width:197px"></colgroup><tr><td>表名</td><td>主键</td><td>关联</td><td>名称</td></tr><tr><td>links</td><td>id</td><td></td><td>友情链接</td></tr></table></td>
<td class="lk">&lt;!--{iCMS:links:list}--&gt;</td>
<td class="op"><div class="b bd b1"><svg><use href="#edit"/></svg><span>编辑</span></div><div class="b bd b2"><svg><use href="#dl"/></svg><span>打包</span></div><div class="b b3"><svg><use href="#x"/></svg><span>关闭</span></div><div class="b b4"><svg><use href="#trash"/></svg><span>卸载</span></div></td></tr>

<tr style="height:66px"><td class="id">28</td><td class="nm"><b>keywords</b><span class="v">v7.0</span></td><td class="ti">内链系统<small>内链系统</small></td>
<td class="dt"><table><colgroup><col style="width:200px"><col style="width:113px"><col style="width:114px"><col style="width:113px"></colgroup><tr><td>表名</td><td>主键</td><td>关联</td><td>名称</td></tr><tr><td>keywords</td><td>id</td><td></td><td>内链</td></tr></table></td>
<td><span class="no">无相关标签</span></td>
<td class="op"><div class="b bd b1"><svg><use href="#edit"/></svg><span>编辑</span></div><div class="b bd b2"><svg><use href="#dl"/></svg><span>打包</span></div><div class="b b3"><svg><use href="#x"/></svg><span>关闭</span></div><div class="b b4"><svg><use href="#trash"/></svg><span>卸载</span></div></td></tr>

<tr style="height:95px"><td class="id">27</td><td class="nm"><b>weixin</b><span class="v">v7.0</span></td><td class="ti">微信系统<small>微信公众平台接口程序</small></td>
<td class="dt"><table><colgroup><col style="width:252px"><col style="width:96px"><col style="width:96px"><col style="width:96px"></colgroup><tr><td>表名</td><td>主键</td><td>关联</td><td>名称</td></tr><tr><td>weixin_api_log</td><td>id</td><td></td><td>记录</td></tr><tr><td>weixin_event</td><td>id</td><td></td><td>事件</td></tr></table></td>
<td><span class="no">无相关标签</span></td>
<td class="op"><div class="b bd b1"><svg><use href="#edit"/></svg><span>编辑</span></div><div class="b bd b2"><svg><use href="#dl"/></svg><span>打包</span></div><div class="b b3"><svg><use href="#x"/></svg><span>关闭</span></div><div class="b b4"><svg><use href="#trash"/></svg><span>卸载</span></div></td></tr>

<tr style="height:69px"><td class="id">26</td><td class="nm"><b>forms</b><span class="v">v7.0</span></td><td class="ti">自定义表单<small>自定义表单管理/接口</small></td>
<td class="dt"><table><colgroup><col style="width:154px"><col style="width:128px"><col style="width:130px"><col style="width:128px"></colgroup><tr><td>表名</td><td>主键</td><td>关联</td><td>名称</td></tr><tr><td>forms</td><td>id</td><td></td><td>表单</td></tr></table></td>
<td class="lk">&lt;!--{iCMS:forms:create}--&gt;<br>&lt;!--{iCMS:forms:list}--&gt;<br>&lt;!--{$forms}--&gt;</td>
<td class="op"><div class="b bd b1"><svg><use href="#edit"/></svg><span>编辑</span></div><div class="b bd b2"><svg><use href="#dl"/></svg><span>打包</span></div><div class="b b3"><svg><use href="#x"/></svg><span>关闭</span></div><div class="b b4"><svg><use href="#trash"/></svg><span>卸载</span></div></td></tr>

<tr style="height:49px"><td class="id">25</td><td class="nm"><b>plugin</b><span class="v">v7.0</span></td><td class="ti">插件管理<small>插件程序</small></td>
<td class="dt" style="padding-top:0!important"><span class="no">无相关表</span></td><td><span class="no">无相关标签</span></td>
<td class="op"><div class="b bd b1"><svg><use href="#edit"/></svg><span>编辑</span></div><div class="b bd b2"><svg><use href="#dl"/></svg><span>打包</span></div></td></tr>

<tr style="height:49px"><td class="id">24</td><td class="nm"><b>filter</b><span class="v">v7.0</span></td><td class="ti">过滤系统<small>过滤系统</small></td>
<td class="dt" style="padding-top:0!important"><span class="no">无相关表</span></td><td><span class="no">无相关标签</span></td>
<td class="op"><div class="b bd b1"><svg><use href="#edit"/></svg><span>编辑</span></div><div class="b bd b2"><svg><use href="#dl"/></svg><span>打包</span></div></td></tr>
</tbody></table>
</body></html>
